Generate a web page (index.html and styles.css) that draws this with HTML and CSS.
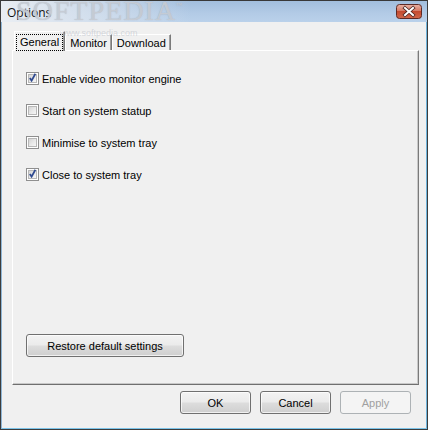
FILE: index.html
```html
<!DOCTYPE html>
<html>
<head>
<meta charset="utf-8">
<link rel="stylesheet" href="styles.css">
</head>
<body>
<div class="window">
  <div class="titlebar">
    <span class="title">Options</span>
    <span class="watermark">SOFTPEDIA<sup>™</sup></span>
    <button class="close" aria-label="Close">
      <svg width="26" height="15" viewBox="0 0 26 15">
        <defs>
          <linearGradient id="cg" x1="0" y1="0" x2="0" y2="1">
            <stop offset="0" stop-color="#e9b3a6"/>
            <stop offset="0.45" stop-color="#d77b66"/>
            <stop offset="0.5" stop-color="#c44a2f"/>
            <stop offset="1" stop-color="#d2684b"/>
          </linearGradient>
        </defs>
        <rect x="0.5" y="0.5" width="25" height="14" rx="3" fill="url(#cg)" stroke="#5e2a25"/>
        <path d="M9 4 L17 11 M17 4 L9 11" stroke="#4a2420" stroke-width="3.6" stroke-linecap="square"/>
        <path d="M9 4 L17 11 M17 4 L9 11" stroke="#ffffff" stroke-width="2" stroke-linecap="square"/>
      </svg>
    </button>
  </div>
  <div class="client">
    <div class="tabs">
      <div class="tab active"><span class="focus">General</span></div>
      <div class="tab">Monitor</div>
      <div class="tab">Download</div>
      <span class="wm-small">www.softpedia.com</span>
    </div>
    <div class="panel">
      <div class="options">
        <label class="row"><span class="cb checked"></span>Enable video monitor engine</label>
        <label class="row"><span class="cb"></span>Start on system statup</label>
        <label class="row"><span class="cb"></span>Minimise to system tray</label>
        <label class="row"><span class="cb checked"></span>Close to system tray</label>
      </div>
      <div class="restore-wrap">
        <button class="btn restore">Restore default settings</button>
      </div>
    </div>
    <div class="footer">
      <button class="btn">OK</button>
      <button class="btn">Cancel</button>
      <button class="btn disabled">Apply</button>
    </div>
  </div>
</div>
</body>
</html>
```
FILE: styles.css
```css
html, body {
  margin: 0;
  padding: 0;
  background: #f0f0f0;
}
body {
  width: 428px;
  height: 430px;
  overflow: hidden;
  font-family: "Liberation Sans", Arial, sans-serif;
  font-size: 11px;
  color: #000;
}
.window {
  width: 428px;
  height: 430px;
  box-sizing: border-box;
  border: 1px solid #3c3c3c;
  border-top: 1px solid #383838;
  display: flex;
  flex-direction: column;
  background: #f0f0f0;
}
.titlebar {
  position: relative;
  height: 21px;
  flex: none;
  overflow: hidden;
  background: linear-gradient(to right, rgba(236,239,243,0.95) 0px, rgba(220,228,238,0.6) 110px, rgba(255,255,255,0) 190px),
              linear-gradient(to bottom, #a2bedd 0%, #b3cbe6 60%, #bad1ea 100%);
  display: flex;
  align-items: center;
  padding-left: 6px;
}
.title {
  font-family: "Open Sans", "DejaVu Sans", sans-serif;
  font-size: 12px;
  color: #111;
  position: relative;
  z-index: 1;
  margin-top: 1px;
}
.watermark {
  position: absolute;
  left: 15px;
  top: -4px;
  line-height: 28px;
  font-family: "Liberation Serif", serif;
  font-size: 28px;
  letter-spacing: 1px;
  color: rgba(205,210,218,0.8);
  text-shadow: 0 0 1px rgba(150,158,170,0.7);
  white-space: nowrap;
  z-index: 2;
  pointer-events: none;
}
.watermark sup {
  font-size: 6px;
  line-height: 6px;
  vertical-align: top;
  position: relative;
  top: 5px;
}
.close {
  position: absolute;
  right: 5px;
  top: 3px;
  width: 26px;
  height: 15px;
  padding: 0;
  border: 0;
  background: none;
  display: block;
  z-index: 3;
}
.close svg { display: block; }
.client {
  flex: 1;
  display: flex;
  flex-direction: column;
  padding: 9px 7px 0 10px;
  border-left: 1px solid #8fb6d6;
  border-right: 1px solid #6fb4dc;
  border-bottom: 1px solid #7cc3e8;
  background: #f0f0f0;
}
.tabs {
  position: relative;
  display: flex;
  align-items: flex-end;
  height: 19px;
  padding-left: 2px;
  z-index: 1;
}
.tab {
  height: 16px;
  box-sizing: border-box;
  padding: 1px 4px 0 4px;
  border: 1px solid #fff;
  border-bottom: 0;
  border-right: 1px solid #7a7a7a;
  box-shadow: inset -1px 0 0 #a0a0a0;
  background: #f0f0f0;
  line-height: 14px;
  white-space: nowrap;
}
.tab.active {
  height: 20px;
  margin-bottom: -1px;
  padding: 2px 1px 0 1px;
}
.tab.active .focus {
  display: block;
  border: 1px dotted #000;
  padding: 0 3px 1px 3px;
  line-height: 14px;
}
.wm-small {
  position: absolute;
  left: 48px;
  top: -3px;
  font-size: 9px;
  color: rgba(170,176,188,0.45);
  pointer-events: none;
}
.panel {
  height: 335px;
  box-sizing: border-box;
  border-top: 1px solid #fff;
  border-left: 1px solid #fff;
  border-right: 1px solid #7a7a7a;
  border-bottom: 1px solid #6f6f6f;
  box-shadow: inset -1px -1px 0 #c8c8c8;
  display: flex;
  flex-direction: column;
  padding: 21px 0 27px 13px;
}
.options {
  display: flex;
  flex-direction: column;
  gap: 19px;
}
.row {
  display: flex;
  align-items: center;
  height: 13px;
  gap: 3px;
  white-space: nowrap;
}
.cb {
  width: 13px;
  height: 13px;
  box-sizing: border-box;
  border: 1px solid #8f8f8f;
  background: #fff;
  position: relative;
  flex: none;
}
.cb::before {
  content: "";
  position: absolute;
  left: 1px; top: 1px; right: 1px; bottom: 1px;
  border: 1px solid #b8b8b8;
  background: linear-gradient(135deg, #d4d4d4 0%, #e8e8e8 50%, #f6f6f6 100%);
}
.cb.checked::after {
  content: "";
  position: absolute;
  left: 2px;
  top: 0px;
  width: 7px;
  height: 9px;
  background: no-repeat center/7px 9px url("data:image/svg+xml;utf8,<svg xmlns='http://www.w3.org/2000/svg' width='7' height='9' viewBox='0 0 7 9'><path d='M0.8 5 L2.6 7.6 L6.4 0.8' fill='none' stroke='%232f4a90' stroke-width='1.8'/></svg>");
}
.restore-wrap {
  margin-top: auto;
}
.btn {
  font-family: "Liberation Sans", Arial, sans-serif;
  font-size: 11px;
  color: #000;
  height: 23px;
  width: 71px;
  box-sizing: border-box;
  border: 1px solid #707070;
  border-radius: 3px;
  background: linear-gradient(to bottom, #f3f3f3 0%, #ebebeb 48%, #dddddd 52%, #cfcfcf 100%);
  box-shadow: inset 0 0 0 1px rgba(255,255,255,0.7);
  padding: 0;
  margin: 0;
}
.btn.restore {
  width: 158px;
}
.btn.disabled {
  color: #a0a0a0;
  border-color: #adb2b5;
  background: #f4f4f4;
  box-shadow: none;
}
.footer {
  display: flex;
  justify-content: flex-end;
  gap: 9px;
  padding-top: 6px;
  padding-right: 8px;
}
```
